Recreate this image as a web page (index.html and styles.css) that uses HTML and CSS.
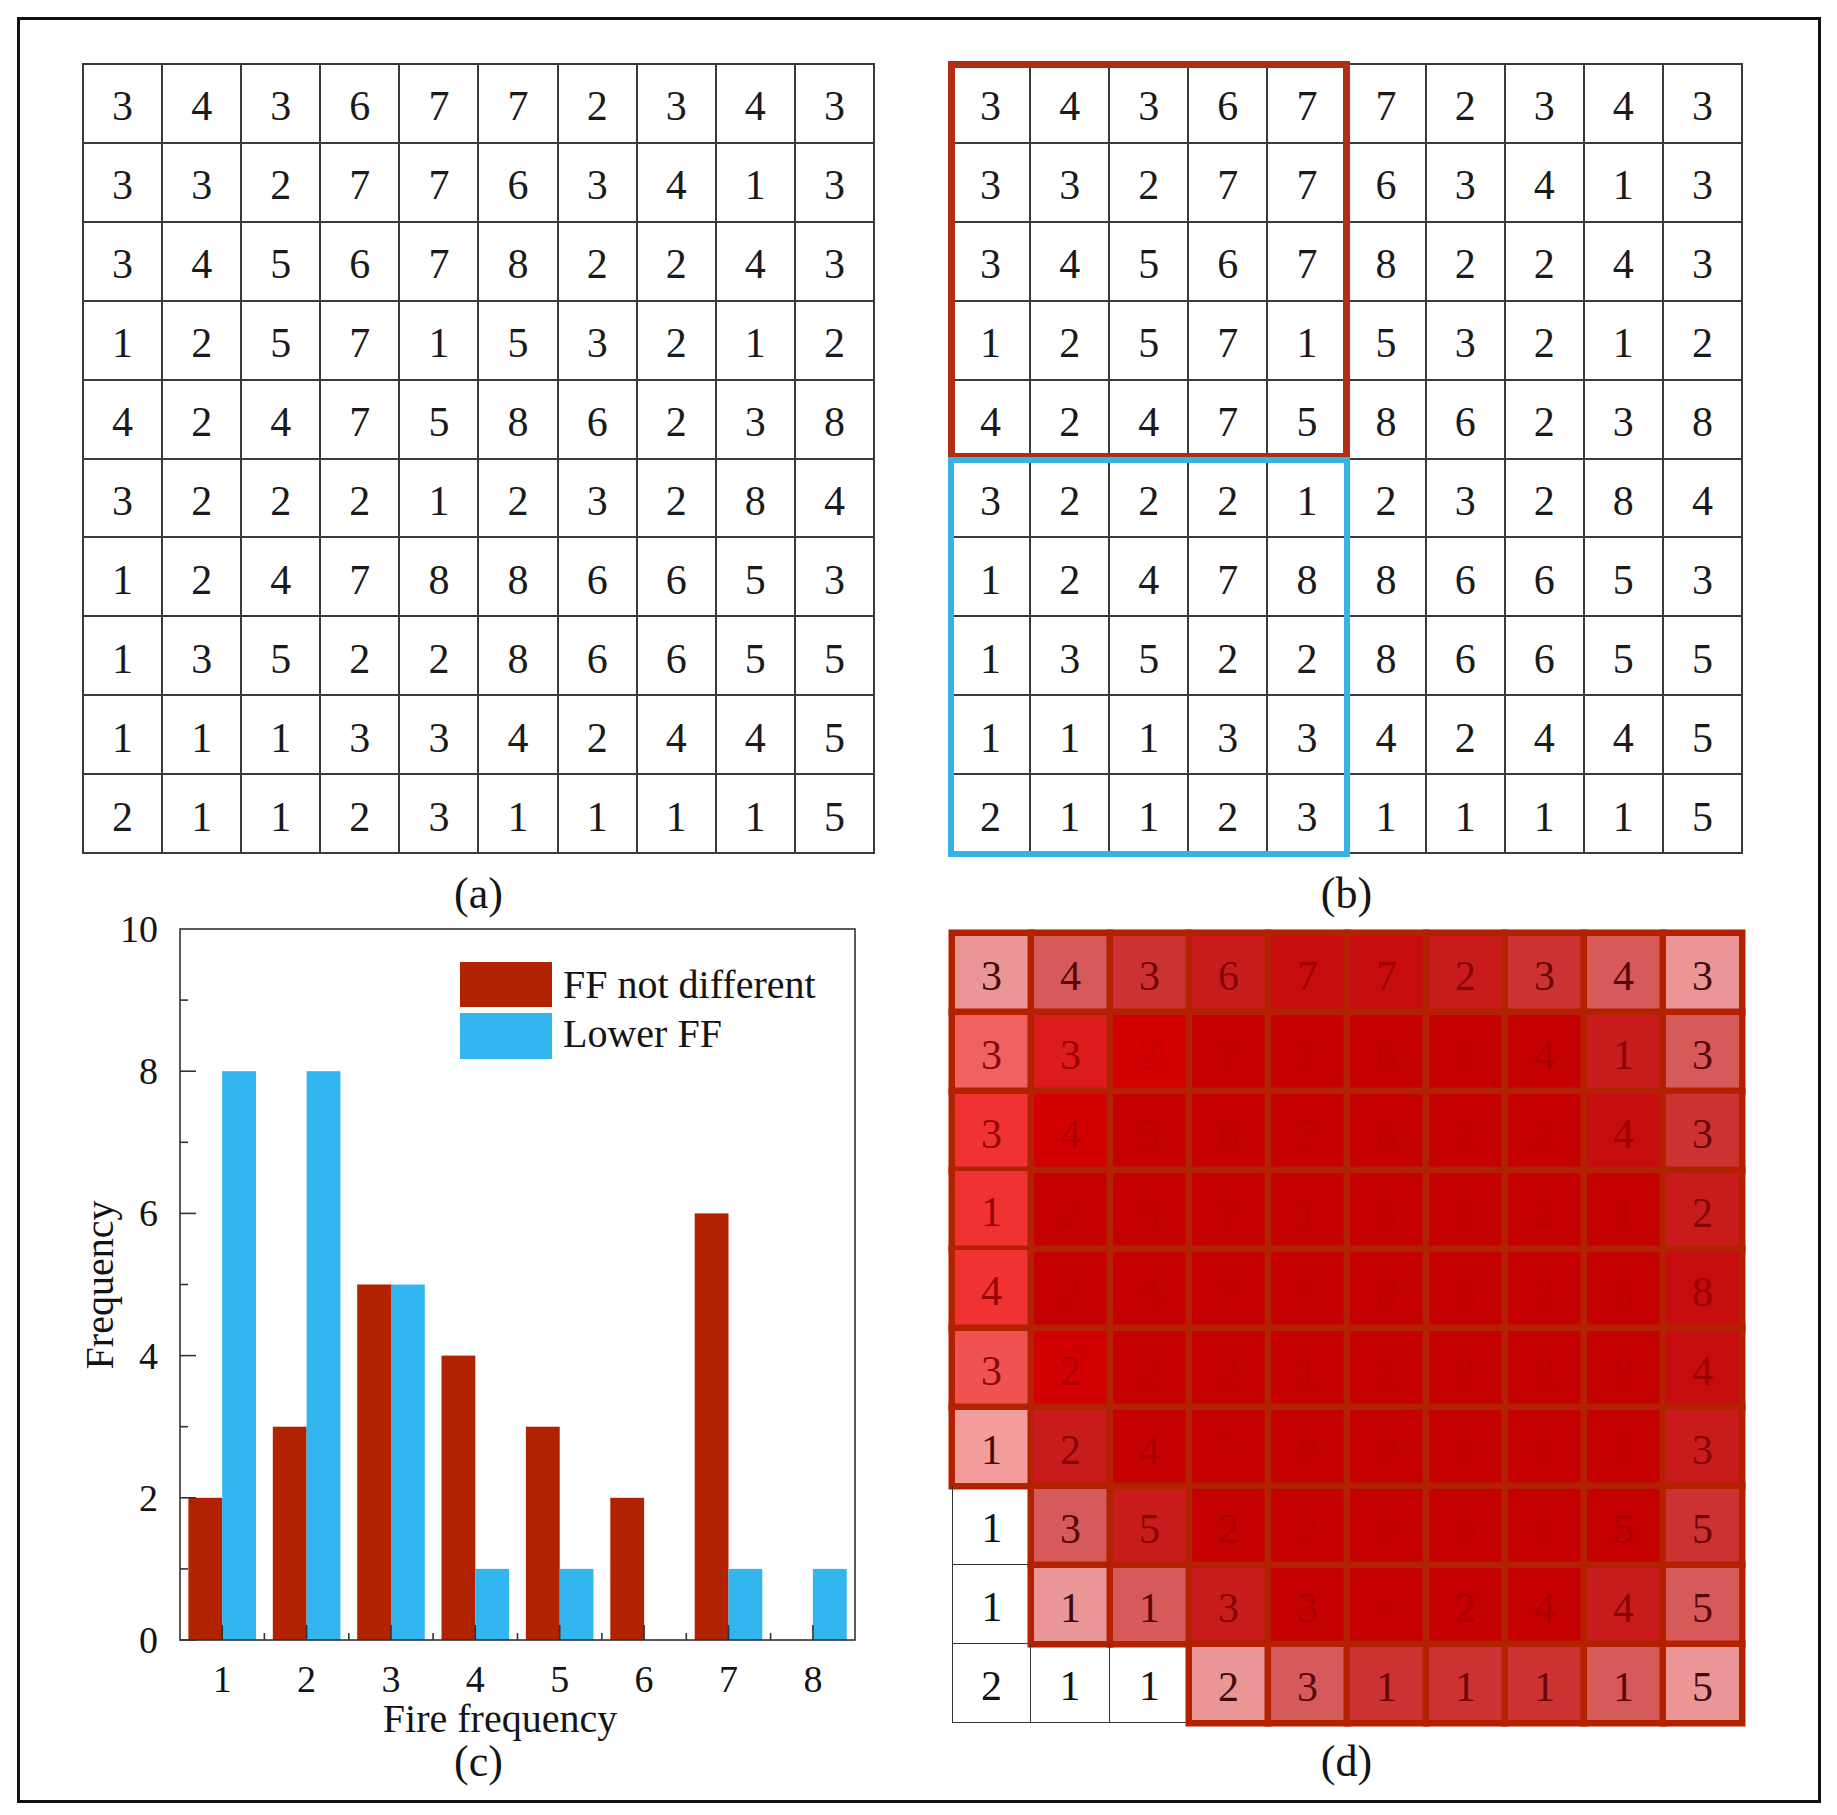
FILE: index.html
```html
<!DOCTYPE html>
<html>
<head>
<meta charset="utf-8">
<title>Fire frequency grids</title>
<link rel="stylesheet" href="styles.css">
</head>
<body>
<div class="frame">
  <div class="panel">
    <div class="gwrap">
      <div class="grid">
        <div>3</div><div>4</div><div>3</div><div>6</div><div>7</div><div>7</div><div>2</div><div>3</div><div>4</div><div>3</div>
        <div>3</div><div>3</div><div>2</div><div>7</div><div>7</div><div>6</div><div>3</div><div>4</div><div>1</div><div>3</div>
        <div>3</div><div>4</div><div>5</div><div>6</div><div>7</div><div>8</div><div>2</div><div>2</div><div>4</div><div>3</div>
        <div>1</div><div>2</div><div>5</div><div>7</div><div>1</div><div>5</div><div>3</div><div>2</div><div>1</div><div>2</div>
        <div>4</div><div>2</div><div>4</div><div>7</div><div>5</div><div>8</div><div>6</div><div>2</div><div>3</div><div>8</div>
        <div>3</div><div>2</div><div>2</div><div>2</div><div>1</div><div>2</div><div>3</div><div>2</div><div>8</div><div>4</div>
        <div>1</div><div>2</div><div>4</div><div>7</div><div>8</div><div>8</div><div>6</div><div>6</div><div>5</div><div>3</div>
        <div>1</div><div>3</div><div>5</div><div>2</div><div>2</div><div>8</div><div>6</div><div>6</div><div>5</div><div>5</div>
        <div>1</div><div>1</div><div>1</div><div>3</div><div>3</div><div>4</div><div>2</div><div>4</div><div>4</div><div>5</div>
        <div>2</div><div>1</div><div>1</div><div>2</div><div>3</div><div>1</div><div>1</div><div>1</div><div>1</div><div>5</div>
      </div>
    </div>
    <div class="caption cap-top">(a)</div>
  </div>

  <div class="panel">
    <div class="gwrap">
      <div class="grid">
        <div>3</div><div>4</div><div>3</div><div>6</div><div>7</div><div>7</div><div>2</div><div>3</div><div>4</div><div>3</div>
        <div>3</div><div>3</div><div>2</div><div>7</div><div>7</div><div>6</div><div>3</div><div>4</div><div>1</div><div>3</div>
        <div>3</div><div>4</div><div>5</div><div>6</div><div>7</div><div>8</div><div>2</div><div>2</div><div>4</div><div>3</div>
        <div>1</div><div>2</div><div>5</div><div>7</div><div>1</div><div>5</div><div>3</div><div>2</div><div>1</div><div>2</div>
        <div>4</div><div>2</div><div>4</div><div>7</div><div>5</div><div>8</div><div>6</div><div>2</div><div>3</div><div>8</div>
        <div>3</div><div>2</div><div>2</div><div>2</div><div>1</div><div>2</div><div>3</div><div>2</div><div>8</div><div>4</div>
        <div>1</div><div>2</div><div>4</div><div>7</div><div>8</div><div>8</div><div>6</div><div>6</div><div>5</div><div>3</div>
        <div>1</div><div>3</div><div>5</div><div>2</div><div>2</div><div>8</div><div>6</div><div>6</div><div>5</div><div>5</div>
        <div>1</div><div>1</div><div>1</div><div>3</div><div>3</div><div>4</div><div>2</div><div>4</div><div>4</div><div>5</div>
        <div>2</div><div>1</div><div>1</div><div>2</div><div>3</div><div>1</div><div>1</div><div>1</div><div>1</div><div>5</div>
      </div>
      <div class="box-red"></div>
      <div class="box-blue"></div>
    </div>
    <div class="caption cap-top">(b)</div>
  </div>

  <div class="panel chart-panel">
    <svg class="chart" width="853" height="838" viewBox="-60 -10 853 838">
      <g class="bars-red">
        <rect x="106.4" y="583.8" width="33.8" height="142.2"/>
        <rect x="190.8" y="512.7" width="33.8" height="213.3"/>
        <rect x="275.2" y="370.5" width="33.8" height="355.5"/>
        <rect x="359.5" y="441.6" width="33.8" height="284.4"/>
        <rect x="443.9" y="512.7" width="33.8" height="213.3"/>
        <rect x="528.3" y="583.8" width="33.8" height="142.2"/>
        <rect x="612.7" y="299.4" width="33.8" height="426.6"/>
      </g>
      <g class="bars-blue">
        <rect x="140.2" y="157.2" width="33.8" height="568.8"/>
        <rect x="224.6" y="157.2" width="33.8" height="568.8"/>
        <rect x="309" y="370.5" width="33.8" height="355.5"/>
        <rect x="393.3" y="654.9" width="33.8" height="71.1"/>
        <rect x="477.7" y="654.9" width="33.8" height="71.1"/>
        <rect x="646.5" y="654.9" width="33.8" height="71.1"/>
        <rect x="730.9" y="654.9" width="33.8" height="71.1"/>
      </g>
      <rect class="plotbox" x="98" y="15" width="675" height="711"/>
      <g class="ticks">
        <line x1="98" y1="726" x2="114" y2="726"/>
        <line x1="98" y1="654.9" x2="106" y2="654.9"/>
        <line x1="98" y1="583.8" x2="114" y2="583.8"/>
        <line x1="98" y1="512.7" x2="106" y2="512.7"/>
        <line x1="98" y1="441.6" x2="114" y2="441.6"/>
        <line x1="98" y1="370.5" x2="106" y2="370.5"/>
        <line x1="98" y1="299.4" x2="114" y2="299.4"/>
        <line x1="98" y1="228.3" x2="106" y2="228.3"/>
        <line x1="98" y1="157.2" x2="114" y2="157.2"/>
        <line x1="98" y1="86.1" x2="106" y2="86.1"/>
        <line x1="140.2" y1="726" x2="140.2" y2="711"/>
        <line x1="224.6" y1="726" x2="224.6" y2="711"/>
        <line x1="309" y1="726" x2="309" y2="711"/>
        <line x1="393.3" y1="726" x2="393.3" y2="711"/>
        <line x1="477.7" y1="726" x2="477.7" y2="711"/>
        <line x1="562.1" y1="726" x2="562.1" y2="711"/>
        <line x1="646.5" y1="726" x2="646.5" y2="711"/>
        <line x1="730.9" y1="726" x2="730.9" y2="711"/>
        <line x1="182.4" y1="726" x2="182.4" y2="719"/>
        <line x1="266.8" y1="726" x2="266.8" y2="719"/>
        <line x1="351.1" y1="726" x2="351.1" y2="719"/>
        <line x1="435.5" y1="726" x2="435.5" y2="719"/>
        <line x1="519.9" y1="726" x2="519.9" y2="719"/>
        <line x1="604.3" y1="726" x2="604.3" y2="719"/>
        <line x1="688.6" y1="726" x2="688.6" y2="719"/>
      </g>
      <g class="ylabels">
        <text x="76" y="739">0</text>
        <text x="76" y="596.8">2</text>
        <text x="76" y="454.6">4</text>
        <text x="76" y="312.4">6</text>
        <text x="76" y="170.2">8</text>
        <text x="76" y="28">10</text>
      </g>
      <g class="xlabels">
        <text x="140.2" y="778">1</text>
        <text x="224.6" y="778">2</text>
        <text x="309" y="778">3</text>
        <text x="393.3" y="778">4</text>
        <text x="477.7" y="778">5</text>
        <text x="562.1" y="778">6</text>
        <text x="646.5" y="778">7</text>
        <text x="730.9" y="778">8</text>
      </g>
      <text class="axis-title" x="418" y="818">Fire frequency</text>
      <text class="axis-title" transform="translate(31,371) rotate(-90)">Frequency</text>
      <rect class="leg-red" x="378" y="48" width="92" height="45"/>
      <rect class="leg-blue" x="378" y="99" width="92" height="46"/>
      <text class="leg-text" x="481" y="84">FF not different</text>
      <text class="leg-text" x="481" y="133">Lower FF</text>
    </svg>
    <div class="caption cap-c">(c)</div>
  </div>

  <div class="panel">
    <div class="heat">
      <div class="h l1">3</div><div class="h l2">4</div><div class="h l3">3</div><div class="h l4">6</div><div class="h l5">7</div><div class="h l5">7</div><div class="h l4">2</div><div class="h l3">3</div><div class="h l2">4</div><div class="h l1">3</div>
      <div class="h s1">3</div><div class="h l4b">3</div><div class="h l6b">2</div><div class="h l6">7</div><div class="h l6">7</div><div class="h l6">6</div><div class="h l6">3</div><div class="h l6 faint">4</div><div class="h l4">1</div><div class="h l2">3</div>
      <div class="h s2">3</div><div class="h l6b faint">4</div><div class="h l6">5</div><div class="h l6">6</div><div class="h l6">7</div><div class="h l6">8</div><div class="h l6">2</div><div class="h l6">2</div><div class="h l5">4</div><div class="h l3">3</div>
      <div class="h s2 nb">1</div><div class="h l6">2</div><div class="h l6">5</div><div class="h l6">7</div><div class="h l6">1</div><div class="h l6">5</div><div class="h l6">3</div><div class="h l6">2</div><div class="h l6">1</div><div class="h l4">2</div>
      <div class="h s2 nb">4</div><div class="h l6">2</div><div class="h l6">4</div><div class="h l6">7</div><div class="h l6">5</div><div class="h l6">8</div><div class="h l6">6</div><div class="h l6">2</div><div class="h l6">3</div><div class="h l5">8</div>
      <div class="h s3">3</div><div class="h l6b faint">2</div><div class="h l6">2</div><div class="h l6">2</div><div class="h l6">1</div><div class="h l6">2</div><div class="h l6">3</div><div class="h l6">2</div><div class="h l6">8</div><div class="h l5">4</div>
      <div class="h s4">1</div><div class="h l4">2</div><div class="h l6 faint">4</div><div class="h l6">7</div><div class="h l6">8</div><div class="h l6">8</div><div class="h l6">6</div><div class="h l6">6</div><div class="h l6">5</div><div class="h l4">3</div>
      <div class="h w wl">1</div><div class="h l2">3</div><div class="h l4">5</div><div class="h l6 faint">2</div><div class="h l6">2</div><div class="h l6">8</div><div class="h l6">6</div><div class="h l6">6</div><div class="h l6 faint">5</div><div class="h l3">5</div>
      <div class="h w wl">1</div><div class="h l1">1</div><div class="h l2">1</div><div class="h l4">3</div><div class="h l6 faint">3</div><div class="h l6">4</div><div class="h l6 faint">2</div><div class="h l6 faint">4</div><div class="h l4">4</div><div class="h l2">5</div>
      <div class="h w wl wr">2</div><div class="h w wr">1</div><div class="h w">1</div><div class="h l1">2</div><div class="h l2">3</div><div class="h l3">1</div><div class="h l3">1</div><div class="h l3">1</div><div class="h l2">1</div><div class="h l1">5</div>
    </div>
    <div class="caption">(d)</div>
  </div>
</div>
</body>
</html>
```

FILE: styles.css
```css
html, body {
  margin: 0;
  padding: 0;
  background: #ffffff;
}

body {
  font-family: "Liberation Serif", "Times New Roman", serif;
  color: #141414;
}

.frame {
  box-sizing: border-box;
  width: 1804px;
  height: 1786px;
  margin: 17px 0 0 17px;
  border: 3px solid #111111;
  padding: 43px 0 0 62px;
  display: grid;
  grid-template-columns: 793px 793px;
  column-gap: 75px;
  align-content: start;
}

.panel {
  display: flex;
  flex-direction: column;
  align-items: center;
}

.caption {
  width: 793px;
  font-size: 44px;
  line-height: 40px;
  height: 40px;
  text-align: center;
  color: #141414;
}

.cap-top {
  margin-top: 20px;
}

/* number grids (a) and (b) */
.gwrap {
  position: relative;
  width: 793px;
  height: 791px;
}

.grid {
  box-sizing: border-box;
  width: 793px;
  height: 791px;
  display: grid;
  grid-template-columns: repeat(10, 1fr);
  grid-template-rows: repeat(10, 1fr);
  gap: 2px;
  padding: 2px;
  background: #3a3a3a;
}

.grid > div {
  box-sizing: border-box;
  background: #ffffff;
  display: flex;
  align-items: center;
  justify-content: center;
  padding-top: 6px;
  font-size: 42px;
  line-height: 1;
  color: #1a1a1a;
}

.box-red {
  position: absolute;
  box-sizing: border-box;
  left: -2.5px;
  top: -2.5px;
  width: 402.5px;
  height: 399.5px;
  border: 7px solid #ae2e16;
}

.box-blue {
  position: absolute;
  box-sizing: border-box;
  left: -2.5px;
  top: 394px;
  width: 402.5px;
  height: 399.5px;
  border: 6px solid #37b2e6;
}

/* chart (c) */
.chart-panel {
  align-items: flex-start;
}

.chart {
  display: block;
  margin: -10px 0 0 -60px;
  overflow: visible;
  font-family: "Liberation Serif", "Times New Roman", serif;
}

.bars-red rect,
.leg-red {
  fill: #b02200;
}

.bars-blue rect,
.leg-blue {
  fill: #33b5ef;
}

.plotbox {
  fill: none;
  stroke: #333333;
  stroke-width: 1.6;
}

.ticks line {
  stroke: #333333;
  stroke-width: 1.6;
}

.ylabels text {
  font-size: 38px;
  text-anchor: end;
  fill: #141414;
}

.xlabels text {
  font-size: 38px;
  text-anchor: middle;
  fill: #141414;
}

.axis-title {
  font-size: 40px;
  text-anchor: middle;
  fill: #141414;
}

.leg-text {
  font-size: 40px;
  fill: #141414;
}

/* heat map (d) */
.heat {
  width: 790px;
  height: 790px;
  margin: 19px 0 19px 1px;
  display: grid;
  grid-template-columns: repeat(10, 79px);
  grid-template-rows: repeat(10, 79px);
  background: #ffffff;
}

.h {
  box-sizing: border-box;
  display: flex;
  align-items: center;
  justify-content: center;
  padding-top: 6px;
  font-size: 42px;
  line-height: 1;
  border: 3.5px solid #b22100;
  box-shadow: 0 0 0 3.5px #b22100;
}

.h.nb {
  border-top: 1.5px solid #b22100;
}

.h.w {
  background: transparent;
  border: 0;
  border-bottom: 1.5px solid #333333;
  box-shadow: none;
  color: #141414;
}

.h.wl { border-left: 1.5px solid #333333; }
.h.wr { border-right: 1.5px solid #333333; }

.l1 { background: #eb9696; color: #3e0a0a; }
.l2 { background: #d65a5a; color: #560808; }
.l3 { background: #cc3232; color: #6c0606; }
.l4 { background: #c81c1c; color: #860404; }
.l4b { background: #dc1c1c; color: #960404; }
.l5 { background: #c60c0c; color: #9c0202; }
.l6 { background: #c40000; color: #c00000; }
.l6b { background: #d20000; color: #c80000; }
.s1 { background: #f06262; color: #840a0a; }
.s2 { background: #f03232; color: #960808; }
.s3 { background: #f05252; color: #880a0a; }
.s4 { background: #f29c9c; color: #4a0a0a; }
.h.faint { color: #ac0000; }
```
